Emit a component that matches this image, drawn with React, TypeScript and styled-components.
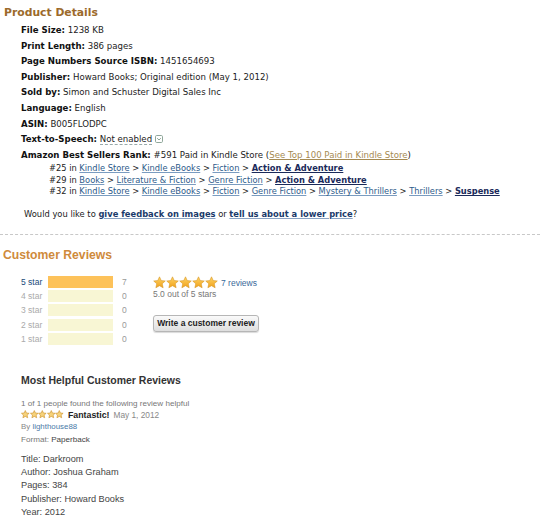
import styled, { createGlobalStyle } from 'styled-components'

const GlobalStyle = createGlobalStyle`
  body {
    margin: 0;
    background: #fff;
    font-family: 'DejaVu Sans', Verdana, sans-serif;
    color: #000;
  }
`

const Page = styled.div`
  width: 540px;
  height: 520px;
  overflow: hidden;
  padding-top: 5px;
  box-sizing: border-box;
`

const DetailsTitle = styled.h2`
  margin: 0 0 0 4px;
  font-family: 'DejaVu Sans', Verdana, sans-serif;
  font-size: 10.8px;
  font-weight: bold;
  color: #9c6a2b;
  line-height: 16px;
`

const DetailList = styled.ul`
  list-style: none;
  margin: 2px 0 0 21px;
  padding: 0;
  font-size: 8.6px;
  color: #222;
`

const DetailItem = styled.li`
  line-height: 15.6px;
  b {
    font-weight: bold;
    color: #111;
  }
`

const Dotted = styled.span`
  border-bottom: 1px dashed #9aa;
`

const ToggleIcon = () => (
  <svg width="8" height="8" viewBox="0 0 8 8" style={{ marginLeft: 3, verticalAlign: '-0.5px' }}>
    <rect x="0.5" y="0.5" width="7" height="7" rx="1.2" fill="#fff" stroke="#8fa79a" />
    <path d="M2.2 3.2L4 5l1.8-1.8" fill="none" stroke="#7c9888" strokeWidth="0.9" />
  </svg>
)

const RankLines = styled.div`
  padding-left: 28px;
  line-height: 11.5px;
  margin-top: 0;
  font-size: 8.3px;
`

const Crumb = styled.a<{ $strong?: boolean }>`
  color: ${(p) => (p.$strong ? '#1a2a5a' : '#2d5b8a')};
  font-weight: ${(p) => (p.$strong ? 'bold' : 'normal')};
  text-decoration: underline;
  text-decoration-color: ${(p) => (p.$strong ? '#1a2a5a' : '#7a9cc0')};
`

const Tan = styled.a`
  color: #a58a52;
  text-decoration: underline;
`

const Feedback = styled.p`
  margin: 11px 0 0 24px;
  font-size: 8.35px;
  color: #222;
  a {
    color: #1a3a6a;
    font-weight: bold;
    text-decoration: underline;
    text-decoration-color: #8aa3c4;
  }
`

const Separator = styled.hr`
  border: none;
  border-top: 1px dashed #c8c8c8;
  margin: 15px 0 0;
`

const ReviewsTitle = styled.h2`
  margin: 12px 0 0 3px;
  font-family: 'Liberation Sans', Arial, sans-serif;
  font-size: 12.2px;
  font-weight: bold;
  color: #cf8a3b;
  line-height: 16px;
`

const Summary = styled.div`
  display: flex;
  margin: 13px 0 0 21px;
  font-family: 'Liberation Sans', Arial, sans-serif;
  font-size: 8.5px;
`

const Histogram = styled.div`
  display: flex;
  flex-direction: column;
  gap: 2px;
  width: 132px;
`

const HistRow = styled.div<{ $active: boolean }>`
  display: flex;
  align-items: center;
  height: 12.2px;
  color: ${(p) => (p.$active ? '#204a7a' : '#aaa')};
`

const HistLabel = styled.span`
  width: 27px;
`

const Bar = styled.div<{ $active: boolean }>`
  width: 65px;
  height: 12px;
  background: ${(p) => (p.$active ? '#fdc25a' : '#f8f6d4')};
`

const HistCount = styled.span`
  margin-left: 9px;
  color: #999;
`

const Overview = styled.div`
  display: flex;
  flex-direction: column;
  padding-top: 1px;
`

const StarLine = styled.div`
  display: flex;
  align-items: center;
  gap: 3px;
  height: 12px;
  a {
    color: #3a6a9a;
    font-size: 8.5px;
  }
`

const OutOf = styled.div`
  color: #777;
  line-height: 11px;
`

const WriteButton = styled.button`
  margin-top: 15px;
  width: 106px;
  height: 17px;
  padding: 0;
  border: 1px solid #b6b6b6;
  border-radius: 3px;
  background: linear-gradient(#fafafa, #dedede);
  box-shadow: 0 1px 1px rgba(0, 0, 0, 0.15);
  font-family: 'Liberation Sans', Arial, sans-serif;
  font-size: 8.5px;
  font-weight: bold;
  color: #222;
`

const Helpful = styled.section`
  margin: 29px 0 0 21px;
  font-family: 'Liberation Sans', Arial, sans-serif;
  color: #333;
`

const HelpfulTitle = styled.h3`
  margin: 0;
  font-size: 10.5px;
  font-weight: bold;
  color: #333;
  line-height: 12px;
`

const SmallGray = styled.div`
  margin-top: 13px;
  font-size: 8.1px;
  color: #777;
  line-height: 10px;
`

const ReviewHead = styled.div`
  display: flex;
  align-items: center;
  gap: 4px;
  line-height: 12px;
  b {
    font-size: 8.8px;
    color: #222;
  }
  span {
    font-size: 8.3px;
    color: #888;
  }
`

const ByLine = styled.div`
  font-size: 7.9px;
  color: #888;
  line-height: 11px;
  a {
    color: #4a7aa8;
  }
`

const Format = styled.div`
  margin-top: 1px;
  font-size: 8.1px;
  color: #777;
  line-height: 14px;
  span {
    color: #444;
  }
`

const Body = styled.div`
  margin-top: 6px;
  font-size: 9.2px;
  color: #444;
  line-height: 13.3px;
`

const Star = ({ size, outline }: { size: number; outline?: boolean }) => (
  <svg width={size} height={size} viewBox="0 0 24 24">
    <defs>
      <linearGradient id={`g${size}`} x1="0" y1="0" x2="0" y2="1">
        <stop offset="0" stopColor="#ffd466" />
        <stop offset="1" stopColor="#f0a21c" />
      </linearGradient>
    </defs>
    <path
      d="M12 1.5l3.2 6.9 7.5.8-5.6 5.1 1.6 7.4L12 17.9l-6.7 3.8 1.6-7.4-5.6-5.1 7.5-.8z"
      fill={outline ? '#f6d27a' : `url(#g${size})`}
      stroke={outline ? '#c88a20' : '#d4921e'}
      strokeWidth={outline ? 1.6 : 1}
    />
  </svg>
)

const StarGroup = styled.span`
  display: inline-flex;
`

const Stars = ({ size, outline }: { size: number; outline?: boolean }) => (
  <StarGroup>
    {[0, 1, 2, 3, 4].map((i) => (
      <Star key={i} size={size} outline={outline} />
    ))}
  </StarGroup>
)

const histogram = [
  { label: '5 star', count: 7 },
  { label: '4 star', count: 0 },
  { label: '3 star', count: 0 },
  { label: '2 star', count: 0 },
  { label: '1 star', count: 0 },
]

export default function App() {
  return (
    <Page>
      <GlobalStyle />
      <DetailsTitle>Product Details</DetailsTitle>
      <DetailList>
        <DetailItem><b>File Size:</b> 1238 KB</DetailItem>
        <DetailItem><b>Print Length:</b> 386 pages</DetailItem>
        <DetailItem><b>Page Numbers Source ISBN:</b> 1451654693</DetailItem>
        <DetailItem><b>Publisher:</b> Howard Books; Original edition (May 1, 2012)</DetailItem>
        <DetailItem><b>Sold by:</b> Simon and Schuster Digital Sales Inc</DetailItem>
        <DetailItem><b>Language:</b> English</DetailItem>
        <DetailItem><b>ASIN:</b> B005FLODPC</DetailItem>
        <DetailItem>
          <b>Text-to-Speech:</b> <Dotted>Not enabled</Dotted>
          <ToggleIcon />
        </DetailItem>
        <DetailItem>
          <b>Amazon Best Sellers Rank:</b> #591 Paid in Kindle Store (
          <Tan>See Top 100 Paid in Kindle Store</Tan>)
          <RankLines>
            <div>
              #25 in <Crumb>Kindle Store</Crumb> &gt; <Crumb>Kindle eBooks</Crumb> &gt;{' '}
              <Crumb>Fiction</Crumb> &gt; <Crumb $strong>Action &amp; Adventure</Crumb>
            </div>
            <div>
              #29 in <Crumb>Books</Crumb> &gt; <Crumb>Literature &amp; Fiction</Crumb> &gt;{' '}
              <Crumb>Genre Fiction</Crumb> &gt; <Crumb $strong>Action &amp; Adventure</Crumb>
            </div>
            <div>
              #32 in <Crumb>Kindle Store</Crumb> &gt; <Crumb>Kindle eBooks</Crumb> &gt;{' '}
              <Crumb>Fiction</Crumb> &gt; <Crumb>Genre Fiction</Crumb> &gt;{' '}
              <Crumb>Mystery &amp; Thrillers</Crumb> &gt; <Crumb>Thrillers</Crumb> &gt;{' '}
              <Crumb $strong>Suspense</Crumb>
            </div>
          </RankLines>
        </DetailItem>
      </DetailList>
      <Feedback>
        Would you like to <a>give feedback on images</a> or <a>tell us about a lower price</a>?
      </Feedback>
      <Separator />
      <ReviewsTitle>Customer Reviews</ReviewsTitle>
      <Summary>
        <Histogram>
          {histogram.map((row) => (
            <HistRow key={row.label} $active={row.count > 0}>
              <HistLabel>{row.label}</HistLabel>
              <Bar $active={row.count > 0} />
              <HistCount>{row.count}</HistCount>
            </HistRow>
          ))}
        </Histogram>
        <Overview>
          <StarLine>
            <Stars size={13} />
            <a>7 reviews</a>
          </StarLine>
          <OutOf>5.0 out of 5 stars</OutOf>
          <WriteButton>Write a customer review</WriteButton>
        </Overview>
      </Summary>
      <Helpful>
        <HelpfulTitle>Most Helpful Customer Reviews</HelpfulTitle>
        <SmallGray>1 of 1 people found the following review helpful</SmallGray>
        <ReviewHead>
          <Stars size={8.6} outline />
          <b>Fantastic!</b>
          <span>May 1, 2012</span>
        </ReviewHead>
        <ByLine>
          By <a>lighthouse88</a>
        </ByLine>
        <Format>
          Format: <span>Paperback</span>
        </Format>
        <Body>
          <div>Title: Darkroom</div>
          <div>Author: Joshua Graham</div>
          <div>Pages: 384</div>
          <div>Publisher: Howard Books</div>
          <div>Year: 2012</div>
        </Body>
      </Helpful>
    </Page>
  )
}
